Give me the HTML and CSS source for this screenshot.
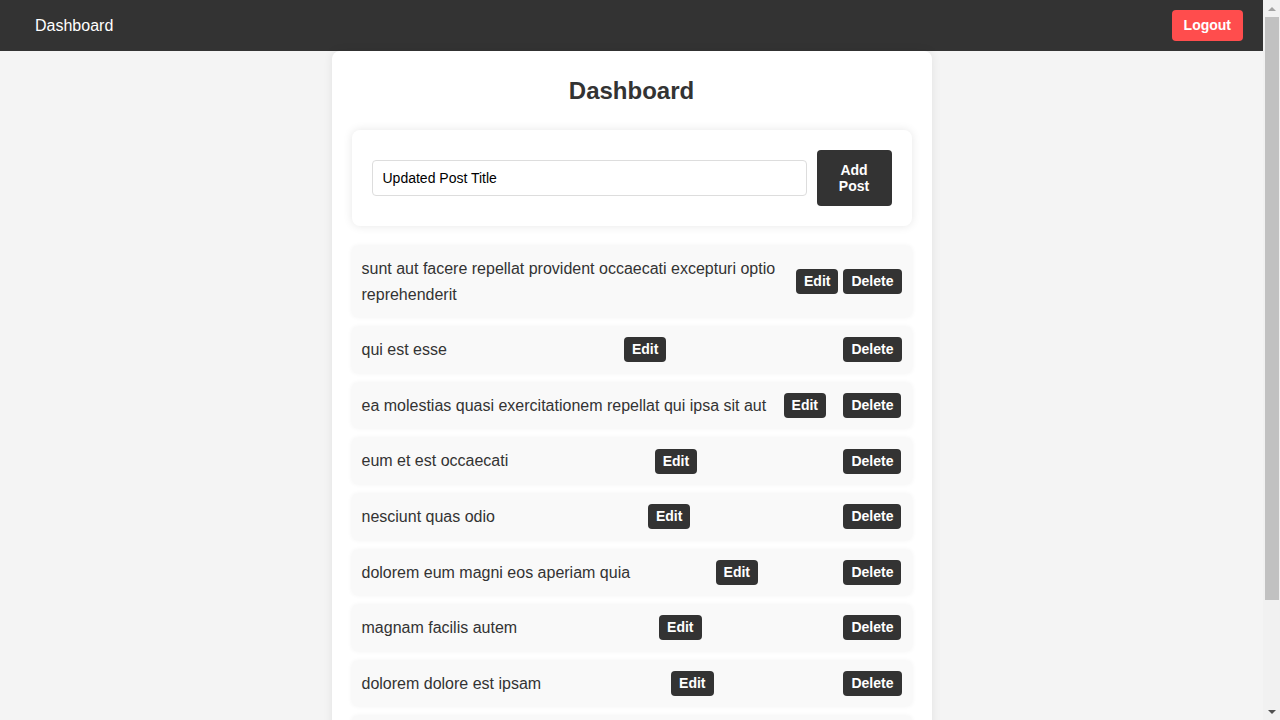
FILE: index.html
```html
<!DOCTYPE html>
<html lang="en">
<head>
<meta charset="utf-8">
<title>Dashboard</title>
<link rel="stylesheet" href="styles.css">
</head>
<body>
<nav class="navbar">
  <span class="brand">Dashboard</span>
  <button class="logout">Logout</button>
</nav>
<main class="container">
  <h2 class="title">Dashboard</h2>
  <form class="post-form">
    <input class="post-input" type="text" value="Updated Post Title">
    <button class="add-btn" type="button">Add Post</button>
  </form>
  <ul class="post-list">
    <li class="post"><span class="post-title">sunt aut facere repellat provident occaecati excepturi optio reprehenderit</span><button class="btn">Edit</button><button class="btn">Delete</button></li>
    <li class="post"><span class="post-title">qui est esse</span><button class="btn">Edit</button><button class="btn">Delete</button></li>
    <li class="post"><span class="post-title">ea molestias quasi exercitationem repellat qui ipsa sit aut</span><button class="btn">Edit</button><button class="btn">Delete</button></li>
    <li class="post"><span class="post-title">eum et est occaecati</span><button class="btn">Edit</button><button class="btn">Delete</button></li>
    <li class="post"><span class="post-title">nesciunt quas odio</span><button class="btn">Edit</button><button class="btn">Delete</button></li>
    <li class="post"><span class="post-title">dolorem eum magni eos aperiam quia</span><button class="btn">Edit</button><button class="btn">Delete</button></li>
    <li class="post"><span class="post-title">magnam facilis autem</span><button class="btn">Edit</button><button class="btn">Delete</button></li>
    <li class="post"><span class="post-title">dolorem dolore est ipsam</span><button class="btn">Edit</button><button class="btn">Delete</button></li>
    <li class="post"><span class="post-title">nesciunt iure omnis dolorem tempora et accusantium</span><button class="btn">Edit</button><button class="btn">Delete</button></li>
    <li class="post"><span class="post-title">optio molestias id quia eum</span><button class="btn">Edit</button><button class="btn">Delete</button></li>
  </ul>
</main>
<div class="scrollbar" aria-hidden="true">
  <div class="sb-arrow sb-up"></div>
  <div class="sb-track"><div class="sb-thumb"></div></div>
  <div class="sb-arrow sb-down"></div>
</div>
</body>
</html>
```
FILE: styles.css
```css
* { box-sizing: border-box; }
body {
  margin: 0 17px 0 0;
  background: #f4f4f4;
  font-family: "Liberation Sans", Arial, sans-serif;
  color: #333;
}
.scrollbar {
  position: fixed;
  top: 0;
  right: 0;
  width: 17px;
  height: 100vh;
  background: #f1f1f1;
  display: flex;
  flex-direction: column;
}
.sb-arrow {
  height: 17px;
  display: flex;
  align-items: center;
  justify-content: center;
}
.sb-arrow::before {
  content: "";
  width: 0;
  height: 0;
  border-left: 4px solid transparent;
  border-right: 4px solid transparent;
}
.sb-up::before { border-bottom: 4px solid #a3a3a3; }
.sb-down::before { border-top: 4px solid #505050; }
.sb-track {
  flex: 1;
  padding: 0 1px 0 2px;
}
.sb-thumb {
  height: 583px;
  background: #c1c1c1;
}
.navbar {
  height: 51px;
  background: #333;
  display: flex;
  align-items: center;
  justify-content: space-between;
  padding: 0 20px 0 35px;
}
.brand {
  color: #fff;
  font-size: 16px;
}
.logout {
  background: #ff4d4d;
  color: #fff;
  border: none;
  border-radius: 4px;
  font-family: inherit;
  font-size: 14px;
  font-weight: bold;
  padding: 8px 12px;
  line-height: 15px;
}
.container {
  width: 600px;
  margin: 0 auto;
  background: #fff;
  border-radius: 8px;
  padding: 20px;
  box-shadow: 0 0 10px rgba(0,0,0,0.08);
}
.title {
  text-align: center;
  font-size: 24px;
  line-height: 28px;
  margin: 6px 0 25px;
  color: #333;
}
.post-form {
  display: flex;
  align-items: center;
  background: #fff;
  border-radius: 8px;
  padding: 20px;
  box-shadow: 0 0 10px rgba(0,0,0,0.1);
  margin-bottom: 20px;
}
.post-input {
  flex: 1;
  height: 36px;
  padding: 0 10px;
  border: 1px solid #ddd;
  border-radius: 4px;
  font-family: inherit;
  font-size: 14px;
  color: #000;
}
.add-btn {
  width: 75px;
  margin-left: 10px;
  background: #333;
  color: #fff;
  border: none;
  border-radius: 4px;
  font-family: inherit;
  font-size: 14px;
  font-weight: bold;
  line-height: 16px;
  padding: 12px 20px;
}
.post-list {
  list-style: none;
  margin: 0;
  padding: 0;
}
.post {
  display: flex;
  align-items: center;
  justify-content: space-between;
  background: #f9f9f9;
  border-radius: 5px;
  padding: 10px;
  margin-bottom: 10px;
  box-shadow: 0 0 5px rgba(0,0,0,0.06);
}
.post-title {
  font-size: 16px;
  line-height: 1.6;
}
.btn {
  margin-left: 5px;
  background: #333;
  color: #fff;
  border: none;
  border-radius: 4px;
  font-family: inherit;
  font-size: 14px;
  font-weight: bold;
  line-height: 16px;
  padding: 4px 8px 5px;
}
```
